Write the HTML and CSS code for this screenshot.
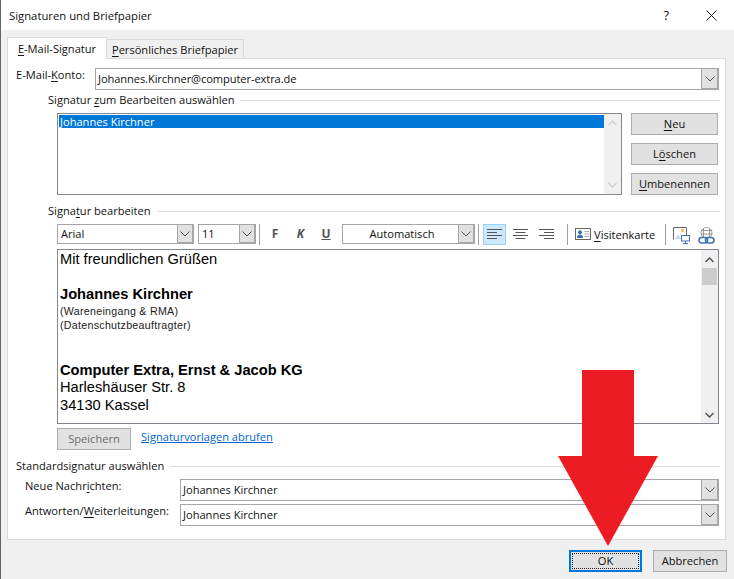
FILE: index.html
```html
<!DOCTYPE html>
<html lang="de">
<head>
    <meta charset="UTF-8">
    <meta name="viewport" content="width=device-width, initial-scale=1.0">
    <title>Signaturen und Briefpapier</title>
    <link rel="stylesheet" href="styles.css">
</head>
<body>
    <div class="dialog">
        <header class="titlebar">
            <span class="title">Signaturen und Briefpapier</span>
            <span class="help">?</span>
            <svg class="close" width="11" height="11" viewBox="0 0 11 11"><path d="M0.5 0.5L10.5 10.5M10.5 0.5L0.5 10.5" stroke="#222" fill="none"/></svg>
        </header>
        <main class="content">
            <div class="tabs">
                <div class="tab active"><u>E</u>-Mail-Signatur</div>
                <div class="tab"><u>P</u>ersönliches Briefpapier</div>
            </div>
            <section class="panel">
                <div class="field-row">
                    <label class="konto-label">E-Mail-<u>K</u>onto:</label>
                    <div class="combo konto-combo">
                        <span class="combo-text">Johannes.Kirchner@computer-extra.de</span>
                        <span class="combo-btn"><svg width="10" height="6" viewBox="0 0 10 6"><path d="M0.5 0.5L5 5L9.5 0.5" stroke="#555" fill="none"/></svg></span>
                    </div>
                </div>

                <div class="group-head indent sel-head"><span>Signatur <u>z</u>um Bearbeiten auswählen</span></div>
                <div class="sel-row">
                    <div class="list">
                        <div class="list-items"><div class="list-item">Johannes Kirchner</div></div>
                        <div class="list-scroll">
                            <svg width="9" height="6" viewBox="0 0 9 6"><path d="M0.5 5L4.5 1L8.5 5" stroke="#d0d0d0" stroke-width="1.5" fill="none"/></svg>
                            <svg width="9" height="6" viewBox="0 0 9 6"><path d="M0.5 1L4.5 5L8.5 1" stroke="#d0d0d0" stroke-width="1.5" fill="none"/></svg>
                        </div>
                    </div>
                    <div class="side-btns">
                        <button class="btn side-btn"><u>N</u>eu</button>
                        <button class="btn side-btn">L<u>ö</u>schen</button>
                        <button class="btn side-btn"><u>U</u>mbenennen</button>
                    </div>
                </div>

                <div class="group-head indent edit-head"><span>Signa<u>t</u>ur bearbeiten</span></div>
                <div class="toolbar">
                    <div class="combo font-combo">
                        <span class="combo-text">Arial</span>
                        <span class="combo-btn"><svg width="10" height="6" viewBox="0 0 10 6"><path d="M0.5 0.5L5 5L9.5 0.5" stroke="#555" fill="none"/></svg></span>
                    </div>
                    <div class="combo size-combo">
                        <span class="combo-text">11</span>
                        <span class="combo-btn"><svg width="10" height="6" viewBox="0 0 10 6"><path d="M0.5 0.5L5 5L9.5 0.5" stroke="#555" fill="none"/></svg></span>
                    </div>
                    <i class="sep sep-a"></i>
                    <span class="fmt fmt-f">F</span>
                    <span class="fmt fmt-k">K</span>
                    <span class="fmt fmt-u">U</span>
                    <div class="combo color-combo">
                        <span class="combo-text center">Automatisch</span>
                        <span class="combo-btn"><svg width="10" height="6" viewBox="0 0 10 6"><path d="M0.5 0.5L5 5L9.5 0.5" stroke="#555" fill="none"/></svg></span>
                    </div>
                    <i class="sep sep-b"></i>
                    <span class="align on"><svg width="15" height="11" viewBox="0 0 15 11"><path d="M0 .5H15M0 3.5H10M0 6.5H15M0 9.5H10" stroke="#555" fill="none"/></svg></span>
                    <span class="align"><svg width="15" height="11" viewBox="0 0 15 11"><path d="M0 .5H15M2.5 3.5H12.5M0 6.5H15M2.5 9.5H12.5" stroke="#555" fill="none"/></svg></span>
                    <span class="align"><svg width="15" height="11" viewBox="0 0 15 11"><path d="M0 .5H15M5 3.5H15M0 6.5H15M5 9.5H15" stroke="#555" fill="none"/></svg></span>
                    <i class="sep sep-c"></i>
                    <svg class="card-icon" width="16" height="12" viewBox="0 0 16 12">
                        <rect x=".5" y=".5" width="15" height="11" fill="#fff" stroke="#666"/>
                        <circle cx="5" cy="4.2" r="2" fill="#3f74b5"/>
                        <path d="M2 10C2 7 3.5 6.5 5 6.5S8 7 8 10Z" fill="#3f74b5"/>
                        <path d="M9.5 3.5H14M9.5 6H14M9.5 8.5H14" stroke="#aaa" fill="none"/>
                    </svg>
                    <span class="card-text"><u>V</u>isitenkarte</span>
                    <i class="sep sep-d"></i>
                    <svg class="pic-icon" width="17" height="17" viewBox="0 0 17 17">
                        <path d="M.5 12.5V.5H13.5V8" stroke="#666" fill="#fff"/>
                        <path d="M2 12L5 7.5L8 12Z" fill="#c5d6e8"/>
                        <rect x="8" y="2" width="3" height="3" fill="#ecc587"/>
                        <rect x="8.5" y="8.5" width="8" height="5.5" fill="#fff" stroke="#3f74b5"/>
                        <path d="M12.5 14V16.5M10 16.5H15" stroke="#3f74b5" fill="none"/>
                    </svg>
                    <svg class="link-icon" width="17" height="17" viewBox="0 0 17 17">
                        <circle cx="8.5" cy="6" r="5.5" fill="none" stroke="#999"/>
                        <path d="M5.5 1.5V10M11.5 1.5V10M3 3.5H14M3 7H14" stroke="#999" fill="none"/>
                        <rect x="1" y="10.5" width="8.5" height="5.5" rx="2.7" fill="#fff" stroke="#3f74b5" stroke-width="1.7"/>
                        <rect x="7.5" y="10.5" width="8.5" height="5.5" rx="2.7" fill="none" stroke="#3f74b5" stroke-width="1.7"/>
                    </svg>
                </div>
                <div class="editor">
                    <div class="editor-text">
                        <p>Mit freundlichen Grüßen</p>
                        <p>&nbsp;</p>
                        <p class="bold">Johannes Kirchner</p>
                        <p class="small">(Wareneingang &amp; RMA)</p>
                        <p class="small">(Datenschutzbeauftragter)</p>
                        <p class="bold gap">Computer Extra, Ernst &amp; Jacob KG</p>
                        <p>Harleshäuser Str. 8</p>
                        <p>34130 Kassel</p>
                    </div>
                    <div class="editor-scroll">
                        <svg class="arrow-up" width="9" height="6" viewBox="0 0 9 6"><path d="M0.5 5L4.5 1L8.5 5" stroke="#555" stroke-width="1.5" fill="none"/></svg>
                        <div class="thumb"></div>
                        <svg class="arrow-down" width="9" height="6" viewBox="0 0 9 6"><path d="M0.5 1L4.5 5L8.5 1" stroke="#555" stroke-width="1.5" fill="none"/></svg>
                    </div>
                </div>
                <div class="save-row">
                    <button class="btn save-btn">Speichern</button>
                    <a class="link" href="#">Signaturvorlagen abrufen</a>
                </div>

                <div class="group-head std-head"><span>Standardsignatur auswählen</span></div>
                <div class="std-row">
                    <label class="std-label">Neue Nachr<u>i</u>chten:</label>
                    <div class="combo std-combo">
                        <span class="combo-text">Johannes Kirchner</span>
                        <span class="combo-btn"><svg width="10" height="6" viewBox="0 0 10 6"><path d="M0.5 0.5L5 5L9.5 0.5" stroke="#555" fill="none"/></svg></span>
                    </div>
                </div>
                <div class="std-row second">
                    <label class="std-label">Antworten/<u>W</u>eiterleitungen:</label>
                    <div class="combo std-combo">
                        <span class="combo-text">Johannes Kirchner</span>
                        <span class="combo-btn"><svg width="10" height="6" viewBox="0 0 10 6"><path d="M0.5 0.5L5 5L9.5 0.5" stroke="#555" fill="none"/></svg></span>
                    </div>
                </div>
            </section>
            <footer class="footer">
                <button class="btn ok-btn"><span>OK</span></button>
                <button class="btn cancel-btn">Abbrechen</button>
            </footer>
        </main>
        <svg class="red-arrow" width="100" height="176" viewBox="0 0 100 176">
            <path d="M24 0H76V86H100L50 176L0 86H24Z" fill="#ed1c24"/>
        </svg>
    </div>
</body>
</html>
```

FILE: styles.css
```css
* {
    box-sizing: border-box;
}
body {
    margin: 0;
    font-family: "Open Sans", "Noto Sans", sans-serif;
    font-size: 11.1px;
    color: #111;
    background: #f0f0f0;
}
u {
    text-underline-offset: 2px;
}
.dialog {
    position: relative;
    width: 734px;
    height: 579px;
    overflow: hidden;
    border-left: 1px solid #646464;
}
.titlebar {
    display: flex;
    align-items: center;
    height: 30px;
    background: #fff;
    padding: 0 17px 0 8px;
}
.title {
    flex: 1;
    font-size: 11.3px;
}
.help {
    margin-right: 37px;
    font-size: 13px;
}
.content {
    padding: 7px 0 0 6px;
    height: 549px;
}
.tabs {
    display: flex;
    align-items: flex-end;
    height: 21px;
}
.tab {
    height: 19px;
    padding-top: 2px;
    width: 138px;
    margin-left: -1px;
    text-align: center;
    border: 1px solid #dadada;
    border-bottom: none;
    background: #f0f0f0;
}
.tab.active {
    position: relative;
    z-index: 1;
    width: 100px;
    margin: 0 0 -1px;
    height: 22px;
    padding-top: 3px;
    background: #fff;
}
.panel {
    width: 719px;
    height: 482px;
    background: #fff;
    border: 1px solid #dadada;
    padding: 9px 5px 0 8px;
}
.field-row {
    display: flex;
}
.konto-label {
    width: 79px;
    margin-top: -1px;
}
.combo {
    display: flex;
    flex-shrink: 0;
    height: 22px;
    border: 1px solid #a6a6a6;
    border-width: 1px 0 1px 1px;
    background: #fff;
}
.konto-combo {
    width: 624px;
}
.konto-combo .combo-text {
    letter-spacing: -.08px;
}
.combo-text {
    flex: 1;
    padding: 2px 0 0 2px;
}
.combo-text.center {
    text-align: center;
    padding-right: 6px;
}
.combo-btn {
    display: flex;
    align-items: center;
    justify-content: center;
    width: 18px;
    margin: -1px 0;
    background: #e1e1e1;
    border: 1px solid #a6a6a6;
    border-width: 1px 2px 2px 1px;
}
.group-head {
    display: flex;
    align-items: center;
    gap: 6px;
    height: 14px;
}
.group-head span {
    margin-top: -2px;
}
.group-head::after {
    content: "";
    flex: 1;
    height: 1px;
    background: #dcdcdc;
}
.indent {
    margin-left: 32px;
}
.sel-head {
    margin-top: 3px;
}
.sel-row {
    display: flex;
    margin: 6px 0 0 41px;
}
.list {
    display: flex;
    width: 565px;
    height: 82px;
    border: 1px solid #828790;
    padding: 1px;
}
.list-items {
    flex: 1;
}
.list-item {
    height: 13px;
    line-height: 13px;
    background: #0078d7;
    color: #fff;
    padding-left: 1px;
}
.list-scroll {
    display: flex;
    flex-direction: column;
    justify-content: space-between;
    align-items: center;
    width: 17px;
    margin: -1px -1px -1px 0;
    padding: 6px 0;
    background: #f0f0f0;
}
.side-btns {
    display: flex;
    flex-direction: column;
    gap: 8px;
    margin-left: 9px;
}
.btn {
    font: inherit;
    color: inherit;
    background: #e1e1e1;
    border: 1px solid #adadad;
    padding: 0 0 2px;
    height: 22px;
}
.side-btn {
    width: 87px;
}
.edit-head {
    margin-top: 9px;
}
.toolbar {
    display: flex;
    align-items: flex-start;
    height: 21px;
    margin: 6px 0 0 41px;
}
.toolbar > * {
    flex-shrink: 0;
}
.font-combo {
    width: 137px;
    height: 20px;
}
.size-combo {
    width: 58px;
    height: 20px;
    margin-left: 4px;
}
.color-combo {
    width: 133px;
    height: 20px;
    margin-left: 3px;
}
.toolbar .combo-text {
    padding: 1px 0 0 3px;
}
.toolbar .combo-btn {
    width: 17px;
}
.sep {
    width: 1px;
    height: 21px;
    background: #a0a0a0;
}
.sep-a {
    margin-left: 3px;
}
.fmt {
    width: 25px;
    text-align: center;
    font: bold 12px/20px "Open Sans", sans-serif;
    color: #555;
}
.fmt-f {
    width: 26px;
    margin-left: 2px;
}
.fmt-k {
    font-style: italic;
}
.fmt-u {
    text-decoration: underline;
    width: 26px;
}
.sep-b {
    margin-left: 3px;
}
.align {
    display: flex;
    align-items: center;
    justify-content: center;
    width: 23px;
    height: 21px;
    margin-right: 3px;
    border: 1px solid transparent;
}
.align.on {
    margin-left: 4px;
    background: #cce8ff;
    border-color: #99d1ff;
}
.sep-c {
    margin-left: 6px;
}
.card-icon {
    margin: 4px 0 0 7px;
}
.card-text {
    margin: 3px 0 0 3px;
    width: 62px;
}
.sep-d {
    margin-left: 9px;
}
.pic-icon {
    margin: 3px 0 0 7px;
}
.link-icon {
    margin: 3px 0 0 8px;
}
.editor {
    display: flex;
    width: 662px;
    height: 175px;
    margin: 4px 0 0 41px;
    border: 1px solid #828790;
    font-family: "Liberation Sans", Arial, sans-serif;
    color: #000;
}
.editor-text {
    flex: 1;
    padding: 1px 0 0 2px;
    font-size: 14.67px;
    line-height: 17.6px;
}
.editor-text p {
    margin: 0;
}
.bold {
    font-weight: bold;
}
.editor-text .small {
    font-size: 10.67px;
    line-height: 14px;
    letter-spacing: .28px;
    color: #222;
}
.editor-text .gap {
    margin-top: 30px;
}
.editor-scroll {
    display: flex;
    flex-direction: column;
    align-items: center;
    width: 17px;
    background: #f0f0f0;
    padding-top: 7px;
}
.thumb {
    width: 15px;
    height: 17px;
    margin-top: 5px;
    background: #cdcdcd;
}
.arrow-down {
    margin-top: auto;
    margin-bottom: 5px;
}
.save-row {
    display: flex;
    margin: 4px 0 0 41px;
}
.save-btn {
    width: 74px;
    color: #6d6d6d;
}
.link {
    margin: 1px 0 0 10px;
    color: #0066cc;
}
.std-head {
    margin-top: 9px;
}
.std-row {
    display: flex;
    margin-top: 6px;
    padding-left: 9px;
}
.std-row.second {
    margin-top: 3px;
}
.std-label {
    width: 155px;
    margin-top: -1px;
}
.std-combo {
    width: 539px;
}
.footer {
    display: flex;
    justify-content: flex-end;
    gap: 11px;
    margin-top: 10px;
    padding-right: 7px;
}
.ok-btn {
    width: 73px;
    border: 2px solid #0078d7;
    padding: 1px;
}
.ok-btn span {
    display: block;
    height: 100%;
    line-height: 13px;
    border: 1px dotted #222;
}
.cancel-btn {
    width: 74px;
}
/* red marker drawn over the dialog */
.red-arrow {
    position: absolute;
    left: 557px;
    top: 370px;
}
```
